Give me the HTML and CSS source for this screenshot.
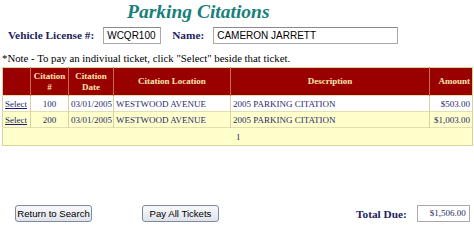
FILE: index.html
```html
<!DOCTYPE html>
<html>
<head>
<meta charset="utf-8">
<link rel="stylesheet" href="styles.css">
</head>
<body>
<div class="page">
  <h1 class="title">Parking Citations</h1>
  <div class="info">
    <span class="lbl lbl-plate">Vehicle License #:</span>
    <span class="field field-plate">WCQR100</span>
    <span class="lbl lbl-name">Name:</span>
    <span class="field field-name">CAMERON JARRETT</span>
  </div>
  <p class="note">*Note - To pay an indiviual ticket, click "Select" beside that ticket.</p>
  <table class="grid">
    <colgroup>
      <col class="c-sel"><col class="c-num"><col class="c-date"><col class="c-loc"><col class="c-desc"><col class="c-amt">
    </colgroup>
    <thead>
      <tr>
        <th></th>
        <th>Citation<br>#</th>
        <th>Citation<br>Date</th>
        <th>Citation Location</th>
        <th>Description</th>
        <th class="amt-h">Amount</th>
      </tr>
    </thead>
    <tbody>
      <tr class="r1">
        <td class="sel"><a href="#">Select</a></td>
        <td class="ctr">100</td>
        <td class="ctr">03/01/2005</td>
        <td>WESTWOOD AVENUE</td>
        <td>2005 PARKING CITATION</td>
        <td class="amt">$503.00</td>
      </tr>
      <tr class="r2">
        <td class="sel"><a href="#">Select</a></td>
        <td class="ctr">200</td>
        <td class="ctr">03/01/2005</td>
        <td>WESTWOOD AVENUE</td>
        <td>2005 PARKING CITATION</td>
        <td class="amt">$1,003.00</td>
      </tr>
      <tr class="pager">
        <td colspan="6">1</td>
      </tr>
    </tbody>
  </table>
  <div class="footer">
    <button class="btn btn-return">Return to Search</button>
    <button class="btn btn-pay">Pay All Tickets</button>
    <span class="total-lbl">Total Due:</span>
    <span class="total-box">$1,506.00</span>
  </div>
</div>
</body>
</html>
```
FILE: styles.css
```css
html, body {
  margin: 0;
  padding: 0;
  background: #ffffff;
}
.page {
  width: 474px;
  height: 224px;
  padding: 0 2px;
  box-sizing: border-box;
  font-family: "Liberation Serif", "Times New Roman", serif;
}
.title {
  margin: 0;
  padding-left: 125px;
  height: 24px;
  font-size: 19.5px;
  line-height: 24px;
  font-weight: bold;
  font-style: italic;
  color: #17807a;
}
.info {
  display: flex;
  align-items: center;
  height: 18px;
  margin-top: 2px;
  white-space: nowrap;
}
.lbl {
  font-size: 11.3px;
  font-weight: bold;
  color: #1e1e5c;
}
.lbl-plate { margin-left: 6px; }
.lbl-name { margin-left: 11px; }
.field {
  box-sizing: border-box;
  height: 17px;
  border: 1px solid #a9a9a9;
  border-top-color: #8a8a8a;
  font-family: "Liberation Sans", Arial, sans-serif;
  font-size: 10px;
  line-height: 15px;
  padding-left: 3px;
  color: #000;
  background: #fff;
}
.field-plate { width: 58px; margin-left: 9px; }
.field-name { width: 185px; margin-left: 9px; }
.note {
  margin: 8px 0 0 0;
  font-size: 10.8px;
  line-height: 13px;
  color: #000;
  white-space: nowrap;
}
.grid {
  margin-top: 2px;
  width: 470px;
  border-collapse: collapse;
  table-layout: fixed;
  border: 1px solid #d9d39a;
}
.c-sel { width: 28px; }
.c-num { width: 38px; }
.c-date { width: 45px; }
.c-loc { width: 117px; }
.c-desc { width: 199px; }
.c-amt { width: 43px; }
.grid th {
  background: #990000;
  color: #ffe4b0;
  font-size: 9px;
  font-weight: bold;
  line-height: 11px;
  height: 27px;
  padding: 0;
  border-left: 1px solid #c86a5a;
  text-align: center;
  vertical-align: middle;
}
.grid th:first-child { border-left: none; }
.grid th.amt-h { text-align: right; padding-right: 2px; }
.grid td {
  font-size: 9px;
  color: #2a2a6a;
  height: 15px;
  padding: 0 2px;
  border-left: 1px solid #d6d2a4;
  border-top: 1px solid #e2deb0;
  white-space: nowrap;
  overflow: hidden;
}
.grid td:first-child { border-left: none; }
.grid .ctr { text-align: center; }
.grid .amt { text-align: right; }
.grid .sel a { color: #1e1e6a; text-decoration: underline; font-size: 9px; }
.r1 td { background: #ffffff; }
.r2 td { background: #ffffcc; }
.pager td {
  background: #ffffcc;
  height: 17px;
  padding-left: 233px;
  color: #2a2a6a;
}
.footer {
  display: flex;
  align-items: center;
  margin-top: 59px;
  white-space: nowrap;
}
.btn {
  height: 17px;
  box-sizing: border-box;
  padding: 0;
  font-family: "Liberation Sans", Arial, sans-serif;
  font-size: 9.6px;
  line-height: 13px;
  color: #000;
  border: 1px solid #7d8aa0;
  border-radius: 3px;
  background: linear-gradient(#f8f9fb, #dfe3eb);
  white-space: nowrap;
}
.btn-return { margin-left: 13px; width: 77px; }
.btn-pay { margin-left: 50px; width: 77px; }
.total-lbl {
  margin-left: 137px;
  font-size: 11.3px;
  font-weight: bold;
  color: #1e1e5c;
}
.total-box {
  margin-left: 10px;
  box-sizing: border-box;
  width: 53px;
  height: 17px;
  border: 1px solid #a9a9a9;
  font-size: 9px;
  line-height: 15px;
  text-align: right;
  padding-right: 3px;
  color: #2a2a6a;
}
```
